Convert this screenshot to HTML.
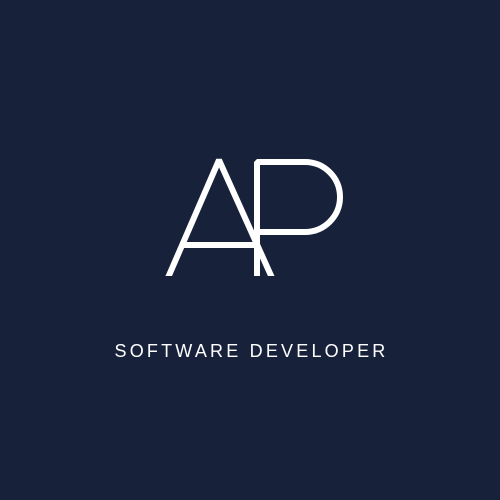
<!DOCTYPE html>
<html><head><style>
html,body{margin:0;padding:0;width:500px;height:500px;background:#17213a;overflow:hidden}
.t{position:absolute;left:0;width:500px;top:341px;text-align:center;color:#fff;font:18px "Liberation Sans",sans-serif;letter-spacing:3.2px;white-space:nowrap;text-indent:3px}
</style></head><body>
<svg width="500" height="500" style="position:absolute;left:0;top:0">
<defs><clipPath id="c"><rect x="0" y="150" width="500" height="126"/></clipPath></defs>
<g stroke="#fff" stroke-width="6" fill="none" stroke-linecap="butt" stroke-linejoin="bevel" clip-path="url(#c)">
<path d="M167 280 L219 160 L273 280"/>
<path d="M182 245 L258 245"/>
<path d="M257 280 L257 162 L305 162 A35 35 0 0 1 305 232 L257 232"/>
</g>
</svg>
<div class="t">SOFTWARE DEVELOPER</div>
</body></html>
